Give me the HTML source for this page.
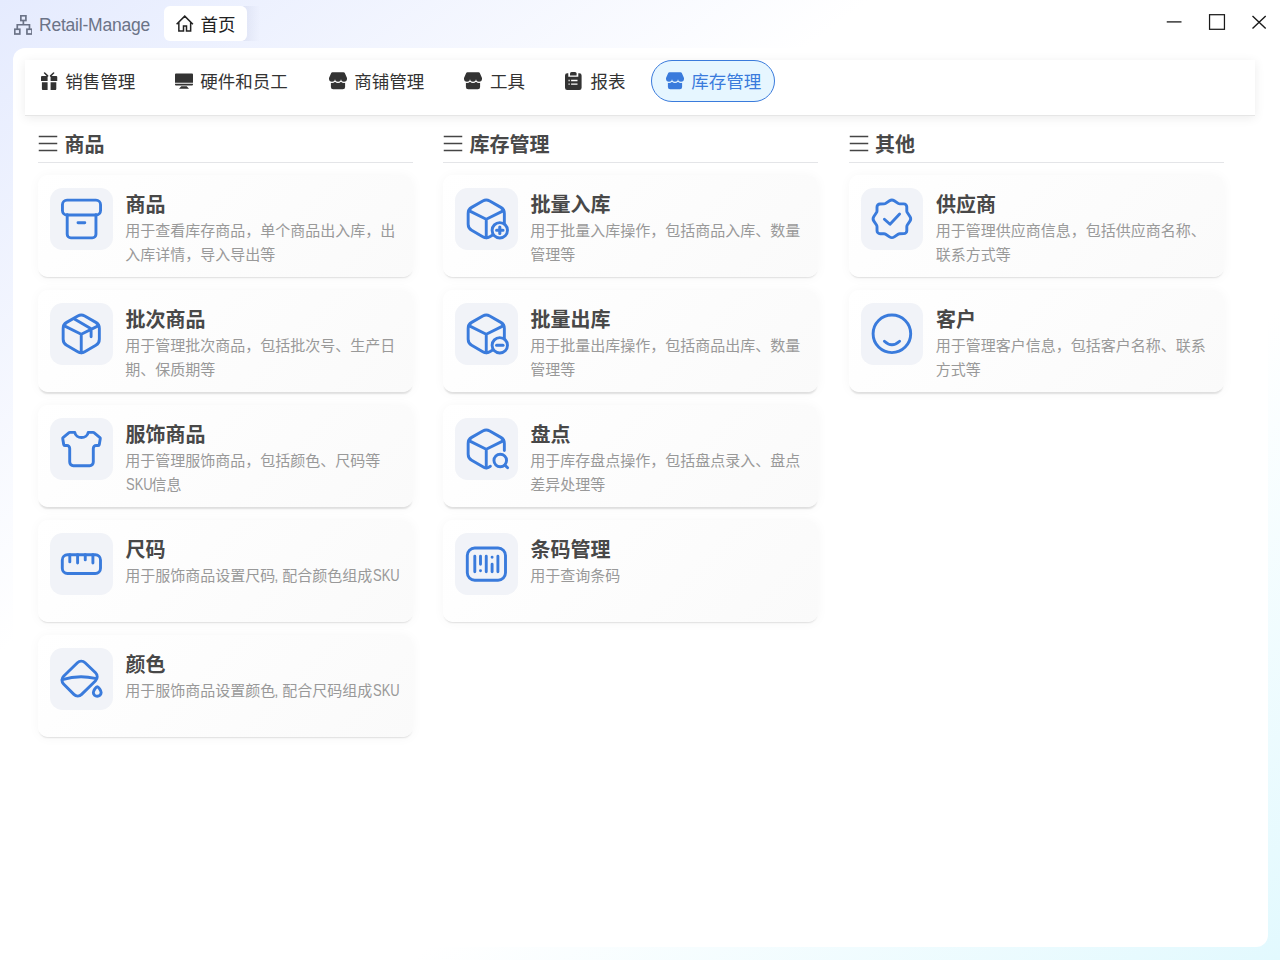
<!DOCTYPE html>
<html lang="zh-CN">
<head>
<meta charset="utf-8">
<title>Retail-Manage</title>
<style>
*{box-sizing:border-box;margin:0;padding:0}
html,body{width:1280px;height:960px;overflow:hidden}
body{font-family:"Liberation Sans","Noto Sans CJK SC",sans-serif;color:#333;position:relative;
 background:linear-gradient(to bottom right,#e5ebfe 0%,#ffffff 34%,#ffffff 66%,#e2f9fe 100%);}
/* title bar */
#titlebar{position:absolute;left:0;top:0;width:1280px;height:48px}
#appicon{position:absolute;left:13.5px;top:15px;width:18.75px;height:19.75px}
#apptitle{position:absolute;left:39px;top:12.5px;font-size:17.5px;line-height:24px;color:#6b7387;white-space:nowrap;letter-spacing:-.22px}
#hometab{position:absolute;left:164px;top:6px;width:83px;height:35px;background:#fff;border-radius:6px}
#hometab svg{position:absolute;left:12px;top:9.25px;width:17.5px;height:17.5px}
#hometab span{position:absolute;left:36.5px;top:6.5px;font-size:17.5px;line-height:24px;color:#222;white-space:nowrap}
.wc{position:absolute;top:11.5px;width:20px;height:20px}
/* main panel */
#panel{position:absolute;left:12.5px;top:48px;width:1255.5px;height:899px;background:#fff;border-radius:12px 0 12px 0}
#nav{position:absolute;left:25px;top:60px;width:1230px;height:56px;background:#fff;border-bottom:1px solid #e6e6e6;box-shadow:0 2px 10px rgba(0,0,0,.08)}
.ni{position:absolute;top:-.25px;height:42.25px;border-radius:21.5px;border:1.25px solid transparent;font-size:17.5px;line-height:24px;color:#333;white-space:nowrap}
.ni svg{position:absolute;left:13.75px;top:11.4px;width:18px;height:18px}
.ni span{position:absolute;left:39.25px;top:8.75px}
.ni.on{border-color:#3a7bdc;background:#e6f6ff;color:#3a7bdc}
/* sections */
.col{position:absolute;top:130px;width:375px}
.sh{height:33px;border-bottom:1px solid #e4e5e8;position:relative}
.sh svg{position:absolute;left:0;top:5px;width:20px;height:20px}
.sh span{position:absolute;left:26.4px;top:.2px;font-size:20px;line-height:30px;font-weight:700;color:#484848;white-space:nowrap}
.card{position:relative;height:101.7px;margin-top:13.3px;border-radius:10px;background:linear-gradient(135deg,#ffffff 0%,#fafafa 100%);box-shadow:0 2.2px 1.6px -1.2px rgba(0,0,0,.11),0 1px 12px rgba(0,0,0,.04)}
.sh + .card{margin-top:12.25px}
.ib{position:absolute;left:12.1px;top:12.65px;width:62.6px;height:62px;border-radius:12.5px;background:#f1f3f8}
.ib svg{position:absolute;left:0;top:0;width:62.5px;height:62px}
.ct{position:absolute;left:87.5px;top:14.6px;font-size:20px;line-height:30px;font-weight:700;color:#484848;white-space:nowrap}
.cd{position:absolute;left:87.2px;top:43.6px;width:280px;font-size:15px;line-height:24px;color:#999}
.la{display:inline-block;width:26px;margin-left:.4px;font-size:16.4px;line-height:1;transform:scaleX(.792);transform-origin:0 50%;white-space:nowrap}
.cm{margin-left:-1px;letter-spacing:-.2px}
</style>
</head>
<body>
<div id="titlebar">
  <svg id="appicon" viewBox="0 0 18.75 19.75" fill="none" stroke="#6b7387" stroke-width="1.7"><rect x="6.85" y=".75" width="5.05" height="4.75"/><rect x=".75" y="14.25" width="5.05" height="4.75"/><rect x="12.95" y="14.25" width="5.05" height="4.75"/><path d="M9.375 5.5v4.25M3.275 14.25v-4.5h12.2v4.5"/></svg>
  <div id="apptitle">Retail-Manage</div>
  <div style="position:absolute;left:243px;top:6px;width:17px;height:35px;background:linear-gradient(to right,rgba(80,90,150,.09),rgba(80,90,150,0))"></div>
  <div id="hometab"><svg viewBox="0 0 17.5 17.5" fill="none" stroke="#222" stroke-width="1.5" stroke-linejoin="miter" stroke-linecap="butt"><path d="M.6 9.3 8.75 1.1l8.15 8.2M2.85 7.4v8.5h4.65v-4.8h3v4.8h4.15V7.4"/></svg><span>首页</span></div>
  <svg class="wc" style="left:1163.5px" viewBox="0 0 20 20" stroke="#1a1a1a" stroke-width="1.3" fill="none"><path d="M2.75 9.9h14.75"/></svg>
  <svg class="wc" style="left:1207px" viewBox="0 0 20 20" stroke="#1a1a1a" stroke-width="1.25" fill="none"><rect x="2.55" y="2.7" width="14.9" height="14.6"/></svg>
  <svg class="wc" style="left:1248.75px" viewBox="0 0 20 20" stroke="#1a1a1a" stroke-width="1.4" fill="none"><path d="M3.5 3.900l13.200 12.500M16.700 3.900l-13.200 12.500"/></svg>
</div>
<div id="panel"></div>
<div id="nav">
  <div class="ni" style="left:0;width:125px"><svg viewBox="0 0 18 18" fill="#333" style="left:15.4px"><path d="M1 3.900h5.600v5.100H0v-4.100a1 1 0 0 1 1-1ZM9.600 3.900h5.650a1 1 0 0 1 1 1v4.100H9.600ZM.9 10.300h5.700v7.900H2.400a1.500 1.500 0 0 1-1.500-1.500ZM9.600 10.300h5.700v6.400a1.500 1.500 0 0 1-1.500 1.500H9.600Z"/><path d="M3.600 1l3 2.900M12.600 1l-3 2.900" stroke="#333" stroke-width="1.500" stroke-linecap="round" fill="none"/></svg><span>销售管理</span></div>
  <div class="ni" style="left:135px;width:143px"><svg viewBox="0 0 18 18" fill="#333"><path d="M1 1.4h16a1 1 0 0 1 1 1v8.4H0v-8.400a1 1 0 0 1 1-1ZM0 11.700h18v.7a1 1 0 0 1-1 1H1a1 1 0 0 1-1-1ZM6.300 14.300h5.400l2.300 2.400H4Z"/></svg><span>硬件和员工</span></div>
  <div class="ni" style="left:289px;width:125px"><svg viewBox="0 0 18 18"><path d="M1.900 8h14.200v6.900a2.300 2.300 0 0 1-2.300 2.300H4.200a2.300 2.300 0 0 1-2.300-2.300Z" fill="#333"/><path d="M3.600.15h10.900a1.400 1.400 0 0 1 1.300.9l2.200 4.900v.9a3 3 0 0 1-6 0a3 3 0 0 1-6 0a3 3 0 0 1-6 0v-.9l2.200-4.900a1.400 1.400 0 0 1 1.400-.9Z" fill="#333" stroke="#fff" stroke-width="2.500" paint-order="stroke"/></svg><span>商铺管理</span></div>
  <div class="ni" style="left:424px;width:90px"><svg viewBox="0 0 18 18"><path d="M1.900 8h14.200v6.900a2.300 2.300 0 0 1-2.300 2.300H4.200a2.300 2.300 0 0 1-2.300-2.300Z" fill="#333"/><path d="M3.600.15h10.900a1.400 1.400 0 0 1 1.300.9l2.200 4.900v.9a3 3 0 0 1-6 0a3 3 0 0 1-6 0a3 3 0 0 1-6 0v-.9l2.200-4.900a1.400 1.400 0 0 1 1.400-.9Z" fill="#333" stroke="#fff" stroke-width="2.500" paint-order="stroke"/></svg><span style="left:40px">工具</span></div>
  <div class="ni" style="left:525.2px;width:90px"><svg viewBox="0 0 18 18" fill="#333" style="top:10.9px;left:13.85px"><path d="M2.200 1.200h1.100v3.600h10v-3.600h1.100a2.200 2.200 0 0 1 2.200 2.200v12.300a2.200 2.200 0 0 1-2.200 2.200H2.200A2.200 2.200 0 0 1 0 15.700V3.400a2.200 2.200 0 0 1 2.200-2.200Z"/><path d="M5 3.600V1.600A1.600 1.600 0 0 1 6.600 0h3.400a1.600 1.600 0 0 1 1.600 1.600v2Z"/><path d="M6.100 8.500h6.400M6.100 12.100h6.400M3.500 8.500h1.200M3.500 12.100h1.200" stroke="#fff" stroke-width="1.300" fill="none"/></svg><span>报表</span></div>
  <div class="ni on" style="left:626px;width:124px"><svg viewBox="0 0 18 18"><path d="M1.900 8h14.200v6.900a2.300 2.300 0 0 1-2.300 2.300H4.200a2.300 2.300 0 0 1-2.300-2.300Z" fill="#3a7bdc"/><path d="M3.600.15h10.900a1.400 1.400 0 0 1 1.300.9l2.200 4.900v.9a3 3 0 0 1-6 0a3 3 0 0 1-6 0a3 3 0 0 1-6 0v-.9l2.200-4.900a1.400 1.400 0 0 1 1.400-.9Z" fill="#3a7bdc" stroke="#e6f6ff" stroke-width="2.500" paint-order="stroke"/></svg><span>库存管理</span></div>
</div>

<div class="col" style="left:38px">
  <div class="sh"><svg viewBox="0 0 20 20" stroke="#454545" stroke-width="1.5" fill="none"><path d="M0.75 1.5h18.5M0.75 8.5h18.5M0.75 15.6h18.5"/></svg><span>商品</span></div>
  <div class="card"><div class="ib"><svg viewBox="0 0 62.5 62" fill="none" stroke="#3a7bdc" stroke-width="2.9" stroke-linecap="round" stroke-linejoin="round"><rect x="12.45" y="12.1" width="38.1" height="14.9" rx="4.6"/><path d="M17.2 26.8V46.2a3.65 3.65 0 0 0 3.65 3.65H42.3a3.65 3.65 0 0 0 3.65-3.65V26.8M28 34.75H34.8"/></svg></div><div class="ct">商品</div><div class="cd">用于查看库存商品，单个商品出入库，出入库详情，导入导出等</div></div>
  <div class="card"><div class="ib"><svg viewBox="0 0 62.5 62" fill="none" stroke="#3a7bdc" stroke-width="2.9" stroke-linecap="round" stroke-linejoin="round"><path d="M27.76 12.98A7.00 7.00 0 0 1 34.74 12.98L45.84 19.38A7.00 7.00 0 0 1 49.35 25.45L49.35 36.22A7.00 7.00 0 0 1 45.85 42.28L34.75 48.68A7.00 7.00 0 0 1 27.75 48.68L16.65 42.28A7.00 7.00 0 0 1 13.15 36.22L13.15 25.45A7.00 7.00 0 0 1 16.66 19.38Z"/><path d="M13.9 22.6L31.25 31.2L48.6 22.6M31.25 31.2V49.8M24 15.8L41.1 25.8V33.7"/></svg></div><div class="ct">批次商品</div><div class="cd">用于管理批次商品，包括批次号、生产日期、保质期等</div></div>
  <div class="card"><div class="ib"><svg viewBox="0 0 62.5 62" fill="none" stroke="#3a7bdc" stroke-width="2.9" stroke-linecap="round" stroke-linejoin="round"><path d="M24.80 14.40L19.82 14.40A1.20 1.20 0 0 0 19.07 14.67L13.06 19.53A1.00 1.00 0 0 0 12.70 20.48L13.76 26.67A1.00 1.00 0 0 0 14.74 27.50L16.80 27.50A2.90 2.90 0 0 1 19.70 30.40L19.70 44.10A3.60 3.60 0 0 0 23.30 47.70L39.70 47.70A3.60 3.60 0 0 0 43.30 44.10L43.30 30.40A2.90 2.90 0 0 1 46.20 27.50L48.26 27.50A1.00 1.00 0 0 0 49.24 26.67L50.30 20.48A1.00 1.00 0 0 0 49.94 19.53L43.93 14.67A1.20 1.20 0 0 0 43.18 14.40L38.20 14.40A6.8 6.2 0 0 1 24.8 14.4Z"/></svg></div><div class="ct">服饰商品</div><div class="cd">用于管理服饰商品，包括颜色、尺码等<span class="la">SKU</span>信息</div></div>
  <div class="card"><div class="ib"><svg viewBox="0 0 62.5 62" fill="none" stroke="#3a7bdc" stroke-width="2.9" stroke-linecap="round" stroke-linejoin="round"><rect x="12.3" y="21.7" width="38.2" height="18.8" rx="5.2"/><path d="M19.8 21.7V28.9M27.6 21.7V30M35.25 21.7V26.9M42.9 21.7V30"/></svg></div><div class="ct">尺码</div><div class="cd">用于服饰商品设置尺码<span class="cm">, </span>配合颜色组成<span class="la">SKU</span></div></div>
  <div class="card"><div class="ib"><svg viewBox="0 0 62.5 62" fill="none" stroke="#3a7bdc" stroke-width="2.9" stroke-linecap="round" stroke-linejoin="round"><path d="M27.43 14.73A5.50 5.50 0 0 1 35.09 14.71L45.54 24.83A5.50 5.50 0 0 1 45.57 32.70L31.63 46.39A5.50 5.50 0 0 1 23.90 46.36L13.55 36.04A5.50 5.50 0 0 1 13.60 28.21Z"/><path d="M12.3 31.7Q28.6 26.45 45.25 30.4"/><path d="M47.25 38.7C46.1 38.7 43.35 42.4 43.35 44.6A3.9 3.7 0 0 0 51.15 44.6C51.15 42.4 48.4 38.7 47.25 38.7Z"/></svg></div><div class="ct">颜色</div><div class="cd">用于服饰商品设置颜色<span class="cm">, </span>配合尺码组成<span class="la">SKU</span></div></div>
</div>
<div class="col" style="left:443px">
  <div class="sh"><svg viewBox="0 0 20 20" stroke="#454545" stroke-width="1.5" fill="none"><path d="M0.75 1.5h18.5M0.75 8.5h18.5M0.75 15.6h18.5"/></svg><span>库存管理</span></div>
  <div class="card"><div class="ib"><svg viewBox="0 0 62.5 62" fill="none" stroke="#3a7bdc" stroke-width="2.9" stroke-linecap="round" stroke-linejoin="round"><path d="M27.76 12.98A7.00 7.00 0 0 1 34.74 12.98L45.84 19.38A7.00 7.00 0 0 1 49.35 25.45L49.35 36.22A7.00 7.00 0 0 1 45.85 42.28L34.75 48.68A7.00 7.00 0 0 1 27.75 48.68L16.65 42.28A7.00 7.00 0 0 1 13.15 36.22L13.15 25.45A7.00 7.00 0 0 1 16.66 19.38Z"/><path d="M13.9 22.6L31.25 31.2L48.6 22.6M31.25 31.2V49.8"/><circle cx="44.8" cy="42.3" r="7.7" fill="#f1f3f8"/><path d="M41.6 42.3H48M44.8 39.1V45.5" stroke-width="3.1"/></svg></div><div class="ct">批量入库</div><div class="cd">用于批量入库操作，包括商品入库、数量管理等</div></div>
  <div class="card"><div class="ib"><svg viewBox="0 0 62.5 62" fill="none" stroke="#3a7bdc" stroke-width="2.9" stroke-linecap="round" stroke-linejoin="round"><path d="M27.76 12.98A7.00 7.00 0 0 1 34.74 12.98L45.84 19.38A7.00 7.00 0 0 1 49.35 25.45L49.35 36.22A7.00 7.00 0 0 1 45.85 42.28L34.75 48.68A7.00 7.00 0 0 1 27.75 48.68L16.65 42.28A7.00 7.00 0 0 1 13.15 36.22L13.15 25.45A7.00 7.00 0 0 1 16.66 19.38Z"/><path d="M13.9 22.6L31.25 31.2L48.6 22.6M31.25 31.2V49.8"/><circle cx="44.8" cy="42.3" r="7.7" fill="#f1f3f8"/><path d="M41.6 42.3H48" stroke-width="3.1"/></svg></div><div class="ct">批量出库</div><div class="cd">用于批量出库操作，包括商品出库、数量管理等</div></div>
  <div class="card"><div class="ib"><svg viewBox="0 0 62.5 62" fill="none" stroke="#3a7bdc" stroke-width="2.9" stroke-linecap="round" stroke-linejoin="round"><path d="M49.35 32.60L49.35 25.45A7.00 7.00 0 0 0 45.84 19.38L34.74 12.98A7.00 7.00 0 0 0 27.76 12.98L16.66 19.38A7.00 7.00 0 0 0 13.15 25.45L13.15 36.22A7.00 7.00 0 0 0 16.65 42.28L29.17 49.50A4.15 4.15 0 0 0 33.33 49.50L35.40 48.30"/><path d="M13.9 22.6L31.25 31.2L48.6 22.6M31.25 31.2V49.8"/><circle cx="45.25" cy="42.5" r="6.3"/><path d="M49.9 47.1L52.6 49.7"/></svg></div><div class="ct">盘点</div><div class="cd">用于库存盘点操作，包括盘点录入、盘点差异处理等</div></div>
  <div class="card"><div class="ib"><svg viewBox="0 0 62.5 62" fill="none" stroke="#3a7bdc" stroke-width="2.9" stroke-linecap="round" stroke-linejoin="round"><rect x="12.3" y="15" width="38.2" height="32.2" rx="7.4"/><path d="M19.8 23.3V38.75M25.5 23.3V31.25M25.5 37.6V37.7M31.25 23.3V38.75M37.1 24.2V24.3M37.1 31.25V38.75M42.9 23.3V38.75"/></svg></div><div class="ct">条码管理</div><div class="cd">用于查询条码</div></div>
</div>
<div class="col" style="left:848.5px">
  <div class="sh"><svg viewBox="0 0 20 20" stroke="#454545" stroke-width="1.5" fill="none"><path d="M0.75 1.5h18.5M0.75 8.5h18.5M0.75 15.6h18.5"/></svg><span>其他</span></div>
  <div class="card"><div class="ib"><svg viewBox="0 0 62.5 62" fill="none" stroke="#3a7bdc" stroke-width="2.9" stroke-linecap="round" stroke-linejoin="round"><path d="M28.56 12.77A4.20 4.20 0 0 1 33.24 12.77L37.14 15.39A3.00 3.00 0 0 0 38.81 15.90L42.77 15.90A3.00 3.00 0 0 1 45.77 18.88L45.79 22.90A3.00 3.00 0 0 0 46.30 24.55L48.93 28.46A4.20 4.20 0 0 1 48.93 33.14L46.31 37.04A3.00 3.00 0 0 0 45.80 38.71L45.80 42.67A3.00 3.00 0 0 1 42.82 45.67L38.80 45.69A3.00 3.00 0 0 0 37.15 46.20L33.24 48.83A4.20 4.20 0 0 1 28.56 48.83L24.66 46.21A3.00 3.00 0 0 0 22.99 45.70L19.03 45.70A3.00 3.00 0 0 1 16.03 42.72L16.01 38.70A3.00 3.00 0 0 0 15.50 37.05L12.87 33.14A4.20 4.20 0 0 1 12.87 28.46L15.49 24.56A3.00 3.00 0 0 0 16.00 22.89L16.00 18.93A3.00 3.00 0 0 1 18.98 15.93L23.00 15.91A3.00 3.00 0 0 0 24.65 15.40Z"/><path d="M23.4 31.25L29 36.25L38.6 26.1"/></svg></div><div class="ct">供应商</div><div class="cd">用于管理供应商信息，包括供应商名称、联系方式等</div></div>
  <div class="card"><div class="ib"><svg viewBox="0 0 62.5 62" fill="none" stroke="#3a7bdc" stroke-width="2.9" stroke-linecap="round" stroke-linejoin="round"><circle cx="30.9" cy="30.8" r="18.8"/><path d="M23.4 38.2Q30.9 45.2 38.6 38.2"/></svg></div><div class="ct">客户</div><div class="cd">用于管理客户信息，包括客户名称、联系方式等</div></div>
</div></body></html>
